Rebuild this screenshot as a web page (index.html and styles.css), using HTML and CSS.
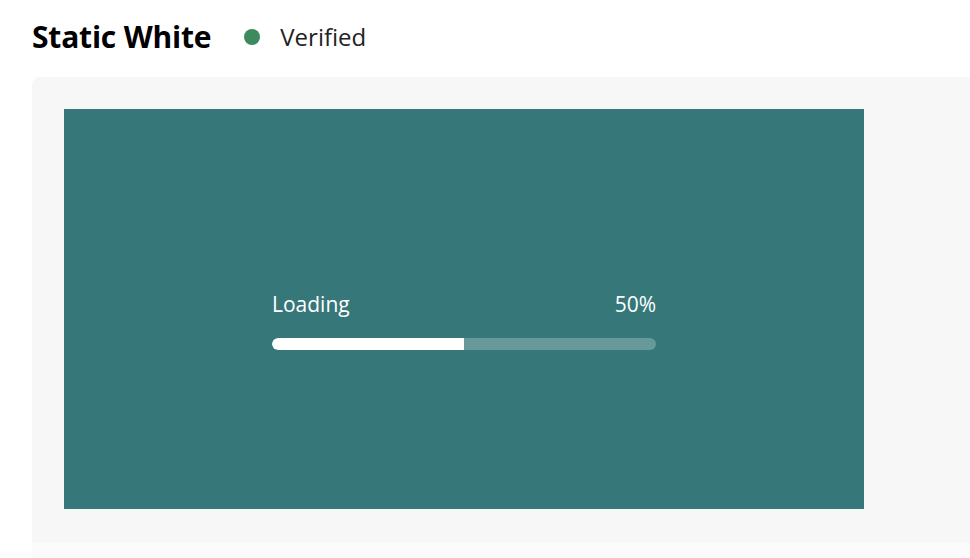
FILE: index.html
```html
<!DOCTYPE html>
<html lang="en">
    <head>
        <meta charset="utf-8">
        <title>Static White</title>
        <link rel="stylesheet" href="styles.css">
    </head>

    <body>
        <div id="header">
            <h1 id="title">Static White</h1>
            <div class="status">
                <span class="status-dot"></span>
                <span class="status-label">Verified</span>
            </div>
        </div>

        <div class="panel">
            <div class="stage">
                <div class="progress">
                    <div class="progress-labels">
                        <span>Loading</span>
                        <span>50%</span>
                    </div>
                    <div class="progress-track">
                        <div class="progress-fill" style="width: 50%"></div>
                    </div>
                </div>
            </div>
        </div>

        <div class="panel-next"></div>
    </body>
</html>
```

FILE: styles.css
```css
body {
    margin: 0;
    background-color: #fff;
    font-family: "Open Sans", sans-serif;
    color: #222;
}

#header {
    box-sizing: border-box;
    display: flex;
    align-items: center;
    height: 77px;
    padding: 0 0 4px 32px;
}

h1 {
    margin: 0;
    font-size: 30px;
    font-weight: 700;
    color: #000;
    letter-spacing: -0.2px;
}

.status {
    display: flex;
    align-items: center;
    margin-left: 33px;
}

.status-dot {
    width: 16px;
    height: 16px;
    border-radius: 50%;
    background-color: #3d8a5f;
}

.status-label {
    margin-left: 20px;
    font-size: 24px;
    color: #222;
}

.panel {
    margin-left: 32px;
    padding: 32px 0 34px 32px;
    background-color: #f7f7f7;
    border-top-left-radius: 8px;
}

.stage {
    box-sizing: border-box;
    display: flex;
    justify-content: center;
    width: 800px;
    height: 400px;
    padding-top: 183px;
    background-color: #367779;
}

.progress {
    width: 384px;
}

.progress-labels {
    display: flex;
    justify-content: space-between;
    height: 24px;
    font-size: 21px;
    line-height: 24px;
    color: #fff;
}

.progress-track {
    height: 12px;
    margin-top: 22px;
    border-radius: 6px;
    overflow: hidden;
    background-color: rgba(255, 255, 255, 0.25);
}

.progress-fill {
    height: 100%;
    background-color: #fff;
    border-radius: 6px 0 0 6px;
}

.panel-next {
    height: 40px;
    margin-left: 32px;
    background-color: #fbfbfb;
}
```
